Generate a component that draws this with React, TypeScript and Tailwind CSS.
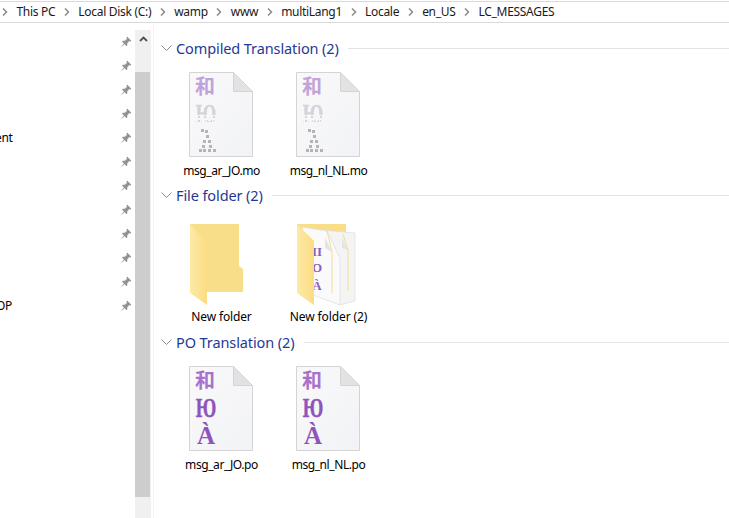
import { useId } from "react";

const crumbs = ["This PC", "Local Disk (C:)", "wamp", "www", "multiLang1", "Locale", "en_US", "LC_MESSAGES"];
const pins = Array.from({ length: 12 }, (_, i) => i);

// the thumbnail's À breaks up into single dots when it is washed out
const ditherDots = [
  [12, 57], [16, 58], [17, 63], [14, 68], [19, 68], [13, 73],
  [20, 73], [10, 77], [14, 77], [19, 77], [24, 77],
];

function CrumbChevron() {
  return (
    <svg width="6" height="8" viewBox="0 0 6 8" className="shrink-0">
      <path d="M1 0.5 L4.5 4 L1 7.5" fill="none" stroke="#8a8a8a" strokeWidth="1.5" />
    </svg>
  );
}

function Pin() {
  return (
    <svg width="12" height="12" viewBox="0 0 12 12">
      <path d="M7 0.5 L11.5 5 L10.3 5.6 L9.3 5.1 L7.3 7.3 L7.3 9.6 L6.3 10 L2.2 5.8 L2.6 4.8 L4.9 4.8 L7 2.8 L6.5 1.7 Z" fill="#8b9399" />
      <path d="M3.8 7.8 L0.5 11.5 L4.4 8.4 Z" fill="#8b9399" />
    </svg>
  );
}

/* document page with three sample glyphs, the .mo variant is washed out + dithered */
function FontFile({ faded }: { faded?: boolean }) {
  const id = useId().replace(/:/g, "");
  return (
    <svg width="66" height="86" viewBox="0 0 66 86">
      <defs>
        <linearGradient id={`${id}page`} x1="0" y1="0" x2="1" y2="1">
          <stop offset="0" stopColor="#f9f9fa" />
          <stop offset="1" stopColor="#f2f3f6" />
        </linearGradient>
        <pattern id={`${id}rows`} width="3" height="4" patternUnits="userSpaceOnUse">
          <rect width="2" height="2" fill="white" />
        </pattern>
        <mask id={`${id}fadeMask`}>
          <rect width="66" height="43" fill="white" />
          <rect y="43" width="66" height="10" fill={`url(#${id}rows)`} />
        </mask>
      </defs>
      <path d="M0.5 0.5 H44.5 L63.5 19.5 V84.5 H0.5 Z" fill={`url(#${id}page)`} stroke="#d4d4d4" />
      <path d="M44.5 0.5 V19.5 H63.5 Z" fill="#e2e2e2" stroke="#d4d4d4" />
      {faded ? (
        <g textAnchor="middle" fontFamily="'Liberation Serif', serif" fontWeight="700">
          <text x="16" y="22" fontSize="20" fontFamily="'Noto Sans CJK SC', serif" fill="#c0a3d8">和</text>
          <g mask={`url(#${id}fadeMask)`}>
            <text transform="translate(17,51) scale(0.76,1.18)" fontSize="24" fill="#d6d2dc" stroke="#d6d2dc" strokeWidth="0.4">Ю</text>
          </g>
          {ditherDots.map(([x, y]) => (
            <rect key={`${x}-${y}`} x={x} y={y} width="3" height="3" fill="#b4b3b8" />
          ))}
        </g>
      ) : (
        <g fontFamily="'Liberation Serif', serif" textAnchor="middle" fontWeight="700" fill="#9053bb">
          <text x="16" y="22" fontSize="20" fontFamily="'Noto Sans CJK SC', serif" fill="#a772cb">和</text>
          <text transform="translate(17,51) scale(0.76,1.18)" fontSize="24" stroke="#9053bb" strokeWidth="0.4">Ю</text>
          <text x="17" y="78" fontSize="25">À</text>
        </g>
      )}
    </svg>
  );
}

function Folder() {
  const id = useId().replace(/:/g, "");
  return (
    <svg width="66" height="84" viewBox="0 0 66 84">
      <defs>
        <linearGradient id={`${id}flap`} x1="0" y1="0" x2="1" y2="0">
          <stop offset="0" stopColor="#fdeaa6" />
          <stop offset="1" stopColor="#fbdc83" />
        </linearGradient>
      </defs>
      <path d="M1 1 H50 V43 L54 46 V69 H18 Z" fill="#f9de8a" />
      <path d="M1 1 L18 20 V82 L1 70 Z" fill={`url(#${id}flap)`} />
    </svg>
  );
}

function FolderWithFiles() {
  const id = useId().replace(/:/g, "");
  return (
    <svg width="66" height="84" viewBox="0 0 66 84">
      <defs>
        <linearGradient id={`${id}flap`} x1="0" y1="0" x2="1" y2="0">
          <stop offset="0" stopColor="#fdeaa6" />
          <stop offset="1" stopColor="#fbdc83" />
        </linearGradient>
      </defs>
      <path d="M1 1 H50 V16 H20 V69 H1 Z" fill="#f9de8a" />
      <path d="M25 7 L59 10 V78 L44 82 L30 70 Z" fill="#f4f4f5" stroke="#dedede" strokeWidth="0.7" />
      <path d="M6 4 L31 8 L44 35 V82 L17 72 Z" fill="#fafafa" stroke="#dcdcdc" strokeWidth="0.7" />
      <path d="M29 14 L36 29 L29 25 Z" fill="#e4e4e4" />
      <path d="M46 15 L52 27 L46 25 Z" fill="#e4e4e4" />
      <path d="M31 8 L36 29 V70" fill="none" stroke="#f5de95" strokeWidth="1" />
      <path d="M47 11 L52 27 V68" fill="none" stroke="#f5de95" strokeWidth="1" />
      <g fontFamily="'Liberation Serif', serif" fontWeight="700" fill="#8e5cbd" textAnchor="middle">
        <text x="21" y="33" fontSize="13">II</text>
        <text x="21" y="49" fontSize="13">O</text>
        <text x="21" y="67" fontSize="13">À</text>
      </g>
      <path d="M1 1 L18 18 V82 L1 70 Z" fill={`url(#${id}flap)`} />
    </svg>
  );
}

function Tile({ label, icon, mt, tracking }: { label: string; icon: React.ReactNode; mt: string; tracking: string }) {
  return (
    <div className="flex w-[107px] flex-col items-center">
      <div className="flex h-[86px] w-[66px] items-start">{icon}</div>
      <div className={`${mt} ${tracking} text-center text-[12px] leading-[16px] text-black`}>{label}</div>
    </div>
  );
}

function Group({ title, pt, children }: { title: string; pt: string; children: React.ReactNode }) {
  return (
    <section className="h-[147px]">
      <div className="flex h-[24px] items-center pl-[7px]">
        <svg width="11" height="7" viewBox="0 0 11 7" className="shrink-0">
          <path d="M0.5 0.5 L5.5 5.5 L10.5 0.5" fill="none" stroke="#8c8c8c" strokeWidth="1" />
        </svg>
        <h2 className="ml-[4px] text-[14.5px] font-normal leading-[20px] tracking-[-0.1px] text-[#1e3a94]">{title}</h2>
        <div className="ml-[9px] h-px flex-1 bg-[#e3e3e3]" />
      </div>
      <div className={`flex pl-[14px] ${pt}`}>{children}</div>
    </section>
  );
}

export default function App() {
  return (
    <div className="flex h-[518px] w-[729px] flex-col overflow-hidden bg-white font-['Noto_Sans',sans-serif]">
      {/* address bar */}
      <div className="mt-px flex h-[22px] shrink-0 items-center gap-[8.5px] border-y border-[#d9d9d9] pb-[1px] pl-[2px] text-[12px] tracking-[-0.3px] text-[#1a1a1a]">
        {crumbs.map((c) => (
          <div key={c} className="flex items-center gap-[8.5px]">
            <CrumbChevron />
            <span className="leading-[20px]">{c}</span>
          </div>
        ))}
      </div>

      <div className="flex flex-1">
        {/* nav pane, labels are cut off by the pane's left edge */}
        <aside className="relative w-[135px] shrink-0 overflow-hidden pt-[7px]">
          {pins.map((i) => (
            <div key={i} className="relative flex h-[24px] items-center justify-end pr-[3px]">
              {i === 4 && <span className="absolute left-[-5px] text-[12px] tracking-[-0.3px] text-black">ent</span>}
              {i === 11 && <span className="absolute left-[-4px] text-[12px] tracking-[-0.3px] text-black">OP</span>}
              <Pin />
            </div>
          ))}
        </aside>

        {/* scrollbar */}
        <div className="mt-[7px] flex w-[16px] shrink-0 flex-col bg-[#f0f0f0]">
          <div className="flex h-[42px] items-start justify-center pt-[6px]">
            <svg width="9" height="6" viewBox="0 0 9 6">
              <path d="M1 5 L4.5 1.5 L8 5" fill="none" stroke="#505050" strokeWidth="1.8" />
            </svg>
          </div>
          <div className="h-[425px] w-[15px] bg-[#cdcdcd]" />
        </div>

        {/* file list */}
        <main className="ml-[2px] flex-1 border-l border-[#f3f3f3] pt-[13px]">
          <Group title="Compiled Translation (2)" pt="pt-[12px]">
            <Tile label="msg_ar_JO.mo" icon={<FontFile faded />} mt="mt-[5px]" tracking="tracking-[-0.42px]" />
            <Tile label="msg_nl_NL.mo" icon={<FontFile faded />} mt="mt-[5px]" tracking="tracking-[-0.42px]" />
          </Group>
          <Group title="File folder (2)" pt="pt-[16px]">
            <Tile label="New folder" icon={<Folder />} mt="mt-[0px]" tracking="tracking-[-0.15px]" />
            <Tile label="New folder (2)" icon={<FolderWithFiles />} mt="mt-[0px]" tracking="tracking-[-0.1px]" />
          </Group>
          <Group title="PO Translation (2)" pt="pt-[12px]">
            <Tile label="msg_ar_JO.po" icon={<FontFile />} mt="mt-[5px]" tracking="tracking-[-0.42px]" />
            <Tile label="msg_nl_NL.po" icon={<FontFile />} mt="mt-[5px]" tracking="tracking-[-0.42px]" />
          </Group>
        </main>
      </div>
    </div>
  );
}
